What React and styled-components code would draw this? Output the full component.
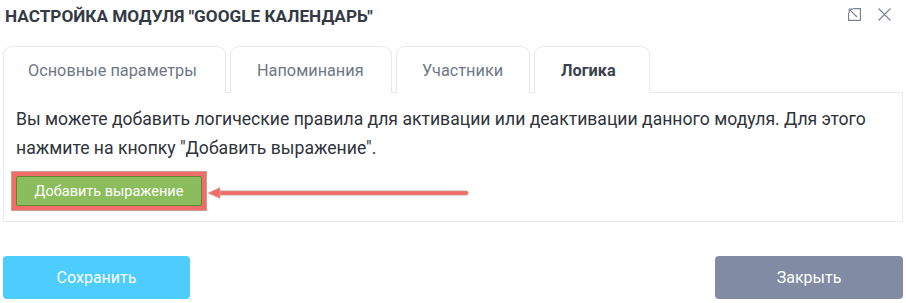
import React from "react";
import styled, { createGlobalStyle } from "styled-components";

const Global = createGlobalStyle`
  html, body { margin: 0; padding: 0; background: #fff; }
  body { font-family: Roboto, "Noto Sans", sans-serif; }
  * { box-sizing: border-box; }
`;

const Dialog = styled.div`
  width: 906px;
  height: 303px;
  padding: 0 3px;
  display: flex;
  flex-direction: column;
  position: relative;
`;

const Header = styled.div`
  height: 46px;
  display: flex;
  align-items: flex-start;
  justify-content: space-between;
  padding: 5px 12px 0 2px;
`;

const Title = styled.h1`
  margin: 0;
  font-size: 17.2px;
  font-weight: 700;
  color: #333a44;
  line-height: 22px;
`;

const HeaderIcons = styled.div`
  display: flex;
  gap: 17px;
  padding-top: 3px;
`;

const IconBtn = styled.button`
  border: 0;
  background: none;
  padding: 0;
  width: 13px;
  height: 13px;
  display: flex;
  color: #7b8599;
  cursor: pointer;
`;

const Tabs = styled.div`
  display: flex;
  gap: 4px;
  height: 47px;
  border-bottom: 1px solid #e6e9ef;
`;

const Tab = styled.div`
  width: ${(p) => p.$w}px;
  padding-left: ${(p) => p.$pl}px;
  border: 1px solid #e6e9ef;
  border-bottom: ${(p) => (p.$active ? "1px solid #fff" : "none")};
  border-radius: 9px 9px 0 0;
  display: flex;
  align-items: center;
  font-size: 16.3px;
  color: ${(p) => (p.$active ? "#3a414d" : "#6f7786")};
  font-weight: ${(p) => (p.$active ? 700 : 400)};
  background: #fff;
  margin-bottom: ${(p) => (p.$active ? "-1px" : "0")};
  height: ${(p) => (p.$active ? "48px" : "47px")};
`;

const Panel = styled.div`
  border: 1px solid #e6e9ef;
  border-top: none;
  height: 129px;
  padding: 12px 12px 0 12px;
`;

const Text = styled.p`
  margin: 0;
  font-size: 17.6px;
  line-height: 29px;
  color: #2f333a;
`;

const Highlight = styled.div`
  display: inline-flex;
  margin-top: 8px;
  margin-left: -5px;
  padding: 4px;
  background: #f26c6c;
  border: 1px solid #c9a08a;
  position: relative;
`;

const AddButton = styled.button`
  height: 30px;
  width: 186px;
  border: 1px solid #5d8a2f;
  border-radius: 2px;
  background: #8cbd5c;
  color: #fff;
  font-family: Roboto, sans-serif;
  font-size: 14.5px;
  padding: 0;
  cursor: pointer;
`;

const Arrow = styled.svg`
  position: absolute;
  left: 195px;
  top: 14px;
  overflow: visible;
`;

const Footer = styled.div`
  margin-top: 34px;
  display: flex;
  justify-content: space-between;
`;

const FooterButton = styled.button`
  width: ${(p) => p.$w}px;
  height: 43px;
  border: 0;
  border-radius: 4px;
  background: ${(p) => p.$bg};
  color: #fff;
  font-family: Roboto, sans-serif;
  font-size: 16px;
  cursor: pointer;
`;

export default function App() {
  return (
    <>
      <Global />
      <Dialog>
        <Header>
          <Title>НАСТРОЙКА МОДУЛЯ "GOOGLE КАЛЕНДАРЬ"</Title>
          <HeaderIcons>
            <IconBtn aria-label="expand">
              <svg width="13" height="13" viewBox="0 0 13 13" fill="none" stroke="currentColor" strokeWidth="1.2">
                <path d="M5 0.6H12.4V12.4H0.6V5" />
                <path d="M1.2 1.2L9 9" />
                <path d="M1.2 1.2V5M1.2 1.2H5" />
              </svg>
            </IconBtn>
            <IconBtn aria-label="close">
              <svg width="13" height="13" viewBox="0 0 13 13" fill="none" stroke="currentColor" strokeWidth="1.2">
                <path d="M0.5 0.5L12.5 12.5M12.5 0.5L0.5 12.5" />
              </svg>
            </IconBtn>
          </HeaderIcons>
        </Header>
        <Tabs>
          <Tab $w={223} $pl={24}>Основные параметры</Tab>
          <Tab $w={162} $pl={26}>Напоминания</Tab>
          <Tab $w={134} $pl={25}>Участники</Tab>
          <Tab $w={116} $pl={26} $active>Логика</Tab>
        </Tabs>
        <Panel>
          <Text>
            Вы можете добавить логические правила для активации или деактивации данного модуля. Для этого
            нажмите на кнопку "Добавить выражение".
          </Text>
          <Highlight>
            <AddButton>Добавить выражение</AddButton>
            <Arrow width="262" height="14" viewBox="0 0 262 14">
              <path d="M12 7H259" stroke="#bfae98" strokeWidth="5" strokeLinecap="round" />
              <path d="M12 7H259" stroke="#f26c6c" strokeWidth="3.6" strokeLinecap="round" />
              <path d="M1 7L13 1.5V12.5Z" fill="#f26c6c" stroke="#c9b39a" strokeWidth="0.6" />
            </Arrow>
          </Highlight>
        </Panel>
        <Footer>
          <FooterButton $w={187} $bg="#4ccdfd">Сохранить</FooterButton>
          <FooterButton $w={188} $bg="#818ba4">Закрыть</FooterButton>
        </Footer>
      </Dialog>
    </>
  );
}
